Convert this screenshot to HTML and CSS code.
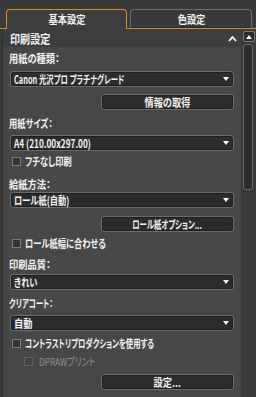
FILE: index.html
```html
<!DOCTYPE html>
<html lang="ja">
<head>
<meta charset="utf-8">
<link rel="stylesheet" href="styles.css">
</head>
<body>
<div class="tabs">
  <div class="tab active"><span class="t k">基本設定</span></div>
  <div class="tab"><span class="t k">色設定</span></div>
</div>
<div class="main">
  <div class="panel">
    <div class="section-head">
      <span class="section-title t k">印刷設定</span>
      <svg class="chev" width="9" height="7" viewBox="0 0 9 7"><polyline points="1,6 4.5,2 8,6" fill="none" stroke="#fff" stroke-width="1.8"/></svg>
    </div>
    <div class="section-body">
      <div class="label m4"><span class="t k">用紙の種類：</span></div>
      <div class="select m6"><span class="t n">Canon 光沢プロ プラチナグレード</span><i class="arrow"></i></div>
      <div class="btn m7"><span class="t k">情報の取得</span></div>
      <div class="label m6"><span class="t m">用紙サイズ：</span></div>
      <div class="select m5"><span class="t m">A4 (210.00x297.00)</span><i class="arrow"></i></div>
      <div class="check m3"><i class="box"></i><span class="t m">フチなし印刷</span></div>
      <div class="label m9"><span class="t k">給紙方法：</span></div>
      <div class="select m1"><span class="t m">ロール紙(自動)</span><i class="arrow"></i></div>
      <div class="btn m8"><span class="t n">ロール紙オプション...</span></div>
      <div class="check m4"><i class="box"></i><span class="t m">ロール紙幅に合わせる</span></div>
      <div class="label m7"><span class="t k">印刷品質：</span></div>
      <div class="select m3"><span class="t m">きれい</span><i class="arrow"></i></div>
      <div class="label m6"><span class="t n">クリアコート：</span></div>
      <div class="select m5"><span class="t k">自動</span><i class="arrow"></i></div>
      <div class="check m5"><i class="box"></i><span class="t n">コントラストリプロダクションを使用する</span></div>
      <div class="check sub disabled m4"><i class="box"></i><span class="t m">DPRAWプリント</span></div>
      <div class="btn m6"><span class="t k">設定...</span></div>
    </div>
  </div>
  <div class="scrollbar">
    <div class="sb-up"><i></i></div>
    <div class="sb-thumb"></div>
  </div>
</div>
</body>
</html>
```
FILE: styles.css
```css
* { box-sizing: border-box; }
html, body { margin: 0; height: 100%; }
body {
  background: #3a3a3a;
  font-family: "Noto Sans CJK JP", "Noto Sans", sans-serif;
  font-feature-settings: "palt";
  color: #f2f2f2;
  font-size: 11px;
  font-weight: bold;
  display: flex;
  flex-direction: column;
  overflow: hidden;
}
.t {
  display: inline-block;
  white-space: nowrap;
  transform-origin: left center;
}
.k { transform: scaleX(0.84); }
.m { transform: scaleX(0.75); }
.n { transform: scaleX(0.67); }
.tab .t, .btn .t { transform-origin: center center; }
.tabs {
  display: flex;
  gap: 3px;
  height: 29px;
  padding: 9px 4px 0 6px;
  border-bottom: 1px solid #e08a22;
}
.tab {
  flex: 0 0 122px;
  height: 19px;
  display: flex;
  align-items: center;
  justify-content: center;
  border: 1px solid #6e6e6e;
  border-bottom: 1px solid #1e2835;
  border-radius: 4px 4px 0 0;
  background: #393939;
}
.tab.active {
  flex-basis: 121px;
  height: 20px;
  margin-bottom: -1px;
  border-color: #e08a22;
  border-bottom: none;
  background: #3d3d3d;
  position: relative;
  z-index: 1;
  padding-bottom: 1px;
}
.main { flex: 1; display: flex; min-height: 0; }
.panel {
  flex: 1;
  margin-left: 2px;
  border-left: 1px solid #2f2f2f;
  background: #474747;
  display: flex;
  flex-direction: column;
}
.section-head {
  height: 18px;
  flex: 0 0 18px;
  background: #3d3d3d;
  display: flex;
  align-items: center;
  justify-content: space-between;
  padding: 0 4px 0 7px;
}
.section-title { font-size: 12px; }
.chev { display: block; margin-top: 1px; }
.section-body {
  display: flex;
  flex-direction: column;
  padding: 0 7px;
}
.label {
  height: 14px;
  line-height: 14px;
  margin-left: -1px;
}
.select, .btn {
  height: 16px;
  border: 1px solid #6c6c6c;
  border-radius: 3px;
  background: #2c2c2c;
  box-shadow: inset 0 0 0 1px #1e1e1e;
  display: flex;
  align-items: center;
}
.select { padding: 0 4px 0 3px; justify-content: space-between; }
.arrow {
  width: 0; height: 0;
  border-left: 3px solid transparent;
  border-right: 3px solid transparent;
  border-top: 4px solid #fff;
}
.btn {
  align-self: flex-end;
  width: 133px;
  justify-content: center;
}
.check {
  height: 14px;
  display: flex;
  align-items: center;
  padding-left: 2px;
}
.check .box {
  width: 9px; height: 9px;
  border: 1px solid #7c7c7c;
  background: #333;
  margin-right: 4px;
  flex: none;
}
.check.sub { padding-left: 14px; }
.check.sub .box { margin-right: 6px; }
.check.disabled { color: #8e8e8e; font-weight: normal; }
.check.disabled .box { border-color: #5e5e5e; background: #444; }
.m1 { margin-top: 1px; }
.m3 { margin-top: 3px; }
.m4 { margin-top: 4px; }
.m5 { margin-top: 5px; }
.m6 { margin-top: 6px; }
.m7 { margin-top: 7px; }
.m8 { margin-top: 8px; }
.m9 { margin-top: 9px; }
.scrollbar {
  flex: 0 0 15px;
  background: #3b3b3b;
  padding: 2px 1px 0 2px;
  display: flex;
  flex-direction: column;
}
.sb-up {
  width: 12px; height: 11px;
  border: 1px solid #7a7a7a;
  border-radius: 2px;
  background: #2a2a2a;
  display: flex;
  align-items: center;
  justify-content: center;
}
.sb-up i {
  width: 0; height: 0;
  border-left: 3px solid transparent;
  border-right: 3px solid transparent;
  border-bottom: 4px solid #fff;
}
.sb-thumb {
  width: 10px;
  height: 146px;
  margin-top: 2px;
  border: 1px solid #6a6a6a;
  border-radius: 3px;
  background: #2d2d2d;
}
```
